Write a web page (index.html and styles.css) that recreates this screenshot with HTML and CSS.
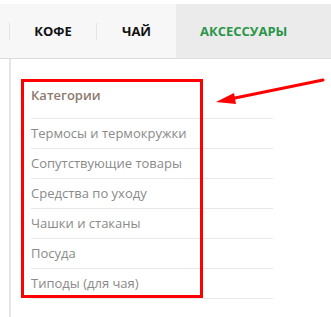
FILE: index.html
```html
<!DOCTYPE html>
<html>
<head>
    <title>Категории</title>
    <link rel="stylesheet" href="styles.css">
</head>
<body>
    <div class="top-gap"></div>
    <div class="nav">
        <span class="nav-sep"></span>
        <a class="nav-tab tab-coffee">КОФЕ</a>
        <span class="nav-sep"></span>
        <a class="nav-tab tab-tea">ЧАЙ</a>
        <a class="nav-tab tab-active">АКСЕССУАРЫ</a>
    </div>

    <div class="main">
        <div class="cats">
            <div class="cats-title">Категории</div>
            <ul class="cats-list">
                <li>Термосы и термокружки</li>
                <li>Сопутствующие товары</li>
                <li>Средства по уходу</li>
                <li>Чашки и стаканы</li>
                <li>Посуда</li>
                <li>Типоды (для чая)</li>
            </ul>
        </div>
    </div>

    <!-- пометки поверх скриншота -->
    <div class="mark-box"></div>
    <svg class="mark-arrow" width="331" height="317" viewBox="0 0 331 317">
        <line x1="323" y1="80" x2="230" y2="99" stroke="#f00" stroke-width="3" stroke-linecap="round"/>
        <polygon points="216,102 234,93 236,104" fill="#f00"/>
    </svg>
</body>
</html>
```
FILE: styles.css
```css
body { margin: 0; font-family: "Open Sans", "Liberation Sans", sans-serif; background: #fff; }
.top-gap { height: 4px; }
.nav {
    display: flex;
    align-items: stretch;
    height: 54px;
    background: #f7f7f7;
    border-bottom: 1px solid #dcdcdc;
    padding-left: 9px;
}
.nav-sep {
    width: 1px;
    height: 17px;
    align-self: center;
    background: #e4e4e4;
}
.nav-tab {
    display: flex;
    align-items: center;
    justify-content: center;
    font-size: 13px;
    font-weight: 700;
    color: #111;
    text-decoration: none;
}
.tab-coffee { width: 86px; }
.tab-tea { width: 79px; }
.tab-active {
    flex: 1;
    justify-content: flex-start;
    padding-left: 24px;
    background: #ebebeb;
    color: #2a9548;
}
.main {
    margin-left: 9px;
    border-left: 2px solid #e6e6e6;
    padding-left: 20px;
    height: 258px;
}
.cats { width: 242px; padding-top: 26px; }
.cats-title {
    font-size: 13px;
    font-weight: 600;
    line-height: 20px;
    color: #8c7a6c;
    padding-bottom: 13px;
}
.cats-list { list-style: none; margin: 0; padding: 0; border-bottom: 1px solid #e8e8e8; }
.cats-list li {
    border-top: 1px solid #e8e8e8;
    height: 29px;
    line-height: 29px;
    font-size: 13px;
    color: #8a8a8a;
}
.mark-box {
    position: absolute;
    left: 21px;
    top: 79px;
    width: 176px;
    height: 213px;
    border: 3px solid #f00;
}
.mark-arrow { position: absolute; left: 0; top: 0; pointer-events: none; }
```
